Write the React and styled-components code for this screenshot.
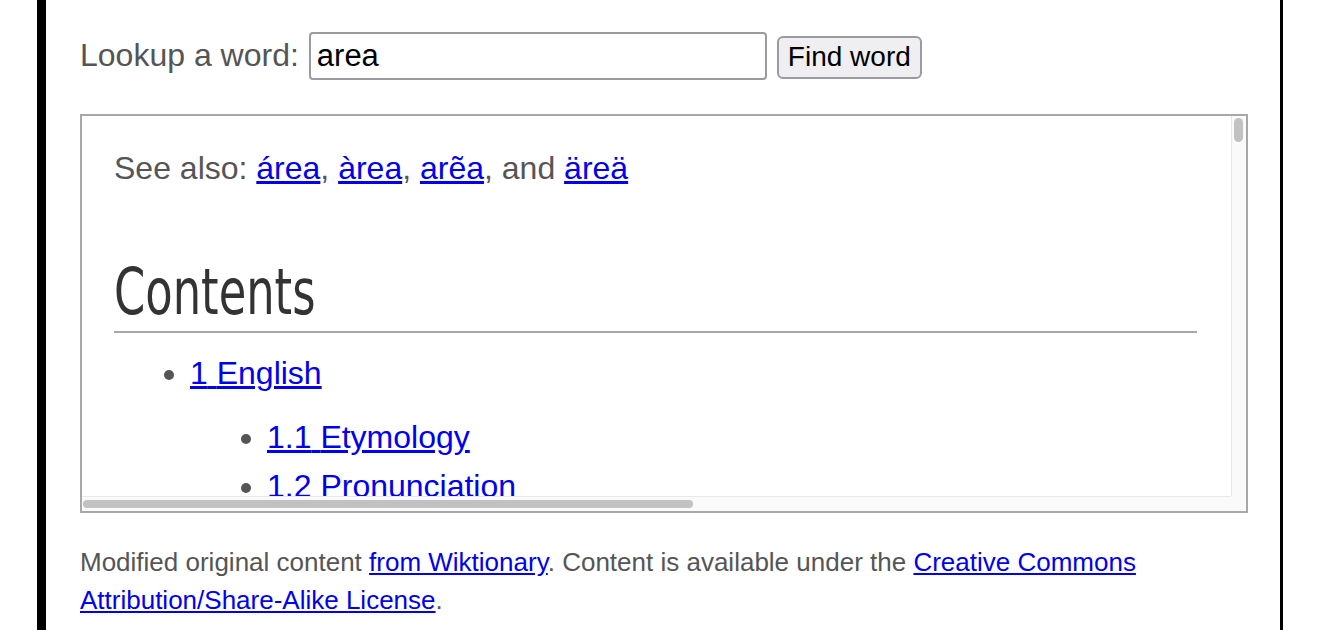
import React from 'react'
import styled, { createGlobalStyle } from 'styled-components'

const GlobalStyle = createGlobalStyle`
  html, body {
    margin: 0;
    padding: 0;
    background: #fff;
  }
  body {
    font-family: "Liberation Sans", Arial, sans-serif;
    color: #555;
  }
`

const toc = [
  { n: '1', label: 'English', sub: [
    { n: '1.1', label: 'Etymology' },
    { n: '1.2', label: 'Pronunciation' },
    { n: '1.3', label: 'Noun' },
    { n: '1.4', label: 'Derived terms' },
    { n: '1.5', label: 'Related terms' },
    { n: '1.6', label: 'Translations' },
  ] },
  { n: '2', label: 'Interlingua', sub: [] },
  { n: '3', label: 'Italian', sub: [] },
]

function App() {
  return (
    <>
      <GlobalStyle />
      <Frame>
        <SearchRow>
          <Label htmlFor="word">Lookup a word:</Label>
          <WordInput id="word" defaultValue="area" />
          <FindButton>Find word</FindButton>
        </SearchRow>

        <EntryBox>
          <Viewport>
            <SeeAlso>
              See also: <Link href="#">área</Link>, <Link href="#">àrea</Link>, <Link href="#">arẽa</Link>, and <Link href="#">äreä</Link>
            </SeeAlso>

            <Heading><HeadingText>Contents</HeadingText></Heading>
            <Toc>
              {toc.map(item => (
                <li key={item.n}>
                  <Link href="#">{item.n} {item.label}</Link>
                  {item.sub.length > 0 && (
                    <SubToc>
                      {item.sub.map(s => (
                        <li key={s.n}><Link href="#">{s.n} {s.label}</Link></li>
                      ))}
                    </SubToc>
                  )}
                </li>
              ))}
            </Toc>
          </Viewport>
          <VTrack><VThumb /></VTrack>
          <HTrack><HThumb /></HTrack>
          <Corner />
        </EntryBox>

        <Footer>
          Modified original content <Link href="#">from Wiktionary</Link>. Content is available under the <Link href="#">Creative Commons Attribution/Share-Alike License</Link>.
        </Footer>
      </Frame>
    </>
  )
}

export default App

const Frame = styled.div`
  margin-left: 37px;
  width: 1246px;
  min-height: 630px;
  box-sizing: border-box;
  border-left: 9px solid #000;
  border-right: 3px solid #000;
  padding: 32px 31px 0 34px;
`

const SearchRow = styled.div`
  display: flex;
  align-items: baseline;
  gap: 10px;
`

const Label = styled.label`
  font-size: 32px;
  color: #555;
`

const WordInput = styled.input`
  width: 458px;
  height: 48px;
  box-sizing: border-box;
  border: 2px solid #9a9aa2;
  border-radius: 4px;
  padding: 0 6px;
  font-family: "Liberation Sans", Arial, sans-serif;
  font-size: 31px;
  color: #000;
  outline: none;
`

const FindButton = styled.button`
  width: 145px;
  height: 43px;
  box-sizing: border-box;
  padding: 0;
  border: 2px solid #9a9aa2;
  border-radius: 6px;
  background: #efeff1;
  font-family: "Liberation Sans", Arial, sans-serif;
  font-size: 28px;
  color: #000;
`

const EntryBox = styled.div`
  margin-top: 34px;
  width: 1168px;
  height: 399px;
  box-sizing: border-box;
  border: 2px solid #a8a8a8;
  display: grid;
  grid-template-columns: 1fr 15px;
  grid-template-rows: 1fr 15px;
  overflow: hidden;
`

const Viewport = styled.div`
  overflow: hidden;
  padding: 34px 34px 0 32px;
`

const VTrack = styled.div`
  background: #fafafa;
  border-left: 1px solid #e8e8e8;
  padding: 2px 3px 0 2px;
`

const VThumb = styled.div`
  height: 24px;
  background: #c2c2c2;
  border-radius: 5px;
`

const HTrack = styled.div`
  background: #fafafa;
  border-top: 1px solid #e8e8e8;
  padding: 3px 0 0 1px;
`

const HThumb = styled.div`
  width: 610px;
  height: 8px;
  background: #c2c2c2;
  border-radius: 5px;
`

const Corner = styled.div`
  background: #fafafa;
`

const SeeAlso = styled.p`
  margin: 0;
  font-size: 32px;
  line-height: 36px;
  color: #555;
`

const Link = styled.a`
  color: #0000ee;
  text-decoration: underline;
`

const Heading = styled.h2`
  margin: 69px 0 0 0;
  padding-bottom: 2px;
  border-bottom: 2px solid #a8a8a8;
  font-family: "DejaVu Sans", sans-serif;
  font-weight: normal;
  font-size: 64px;
  line-height: 74px;
  color: #333;
`

const HeadingText = styled.span`
  display: inline-block;
  transform: scaleX(0.7);
  transform-origin: left center;
`

const Toc = styled.ul`
  margin: 16px 0 0 0;
  padding-left: 76px;
  font-size: 32px;
  line-height: 49px;
  color: #555;
`

const SubToc = styled.ul`
  margin: 15px 0 0 0;
  padding-left: 77px;
  list-style: disc;
`

const Footer = styled.p`
  margin: 30px 0 0 0;
  font-size: 26px;
  line-height: 38px;
  color: #555;
`
